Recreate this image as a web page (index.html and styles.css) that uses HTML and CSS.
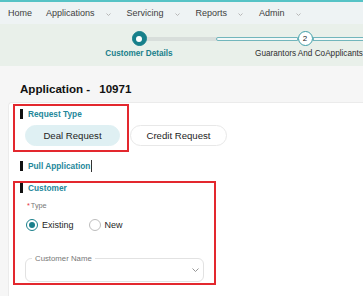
FILE: index.html
```html
<!DOCTYPE html>
<html lang="en">
<head>
  <meta charset="UTF-8">
  <meta name="viewport" content="width=device-width, initial-scale=1.0">
  <title>Application</title>
  <link rel="stylesheet" href="styles.css">
</head>
<body>
  <div class="topline"></div>
  <nav class="menu">
    <span class="menu-item">Home</span>
    <span class="menu-item">Applications<svg class="menu-caret" width="5" height="3" viewBox="0 0 5 3"><polyline points="0.5,0.5 2.5,2.5 4.5,0.5" fill="none" stroke="#b0b0b0" stroke-width="0.9"/></svg></span>
    <span class="menu-item">Servicing<svg class="menu-caret" width="5" height="3" viewBox="0 0 5 3"><polyline points="0.5,0.5 2.5,2.5 4.5,0.5" fill="none" stroke="#b0b0b0" stroke-width="0.9"/></svg></span>
    <span class="menu-item">Reports<svg class="menu-caret" width="5" height="3" viewBox="0 0 5 3"><polyline points="0.5,0.5 2.5,2.5 4.5,0.5" fill="none" stroke="#b0b0b0" stroke-width="0.9"/></svg></span>
    <span class="menu-item">Admin<svg class="menu-caret" width="5" height="3" viewBox="0 0 5 3"><polyline points="0.5,0.5 2.5,2.5 4.5,0.5" fill="none" stroke="#b0b0b0" stroke-width="0.9"/></svg></span>
  </nav>

  <div class="stepper">
    <div class="step done">
      <div class="step-track">
        <span class="seg"></span>
        <span class="dot"></span>
        <span class="seg seg-gray"></span>
      </div>
      <div class="step-label">Customer Details</div>
    </div>
    <div class="step">
      <div class="step-track">
        <span class="seg seg-line seg-first"></span>
        <span class="dot">2</span>
        <span class="seg seg-line"></span>
      </div>
      <div class="step-label">Guarantors And CoApplicants</div>
    </div>
  </div>

  <div class="page">
    <h1 class="app-title">Application -<span class="app-id">10971</span></h1>
    <div class="card">
      <div class="section request-type">
        <div class="section-title"><span class="bar"></span>Request Type</div>
        <div class="pills">
          <span class="pill active">Deal Request</span>
          <span class="pill pill-wide">Credit Request</span>
        </div>
      </div>

      <div class="section-title pull"><span class="bar"></span>Pull Application<span class="cursor"></span></div>

      <div class="section customer">
        <div class="section-title"><span class="bar"></span>Customer</div>
        <div class="field-label"><span class="req">*</span>Type</div>
        <div class="radios">
          <span class="radio checked"><span class="radio-circle"></span>Existing</span>
          <span class="radio"><span class="radio-circle"></span>New</span>
        </div>
        <div class="select">
          <span class="select-label">Customer Name</span>
          <svg width="7" height="4" viewBox="0 0 7 4"><polyline points="0.5,0.5 3.5,3.5 6.5,0.5" fill="none" stroke="#8a8a8a" stroke-width="0.9"/></svg>
        </div>
      </div>
    </div>
  </div>
</body>
</html>
```

FILE: styles.css
```css
*{
  margin: 0;
  padding: 0;
  box-sizing: border-box;
}
html, body{
  overflow: hidden;
}
body{
  width: 363px;
  height: 296px;
  font-family: "Liberation Sans", Arial, sans-serif;
  background: #f6f6f6;
  color: #222;
}
.topline{
  height: 2px;
  background: #56c3c6;
}
.menu{
  display: flex;
  align-items: center;
  gap: 16px;
  height: 22px;
  padding-left: 8px;
  background: #eef3f4;
  font-size: 9px;
  color: #404040;
}
.menu-item{
  display: flex;
  align-items: center;
  white-space: nowrap;
}
.menu-item:first-child{
  margin-right: -2px;
}
.menu-caret{
  margin: 2px 0 0 11px;
}

.stepper{
  display: flex;
  height: 42px;
  padding: 7px 0 0 54px;
  background: #e9f0ea;
  overflow: hidden;
}
.step{
  flex: none;
  width: 170px;
  display: flex;
  flex-direction: column;
  align-items: center;
}
.step-track{
  display: flex;
  align-items: center;
  width: 100%;
  height: 15px;
}
.seg{
  flex: 1;
  height: 4px;
}
.seg-gray{
  background: #d8dedb;
}
.seg-line{
  border: 1px solid #72b6bc;
  background: #f3f8f8;
}
.seg-first{
  margin-left: -8px;
  border-radius: 2px 0 0 2px;
}
.dot{
  flex: none;
  width: 15px;
  height: 15px;
  border-radius: 50%;
  display: flex;
  align-items: center;
  justify-content: center;
  border: 1.5px solid #3f9ea8;
  background: #fff;
  font-size: 8px;
  color: #222;
}
.step.done .dot{
  background: #17808b;
  border-color: #17808b;
}
.step.done .dot:after{
  content: '';
  width: 6px;
  height: 6px;
  border-radius: 50%;
  background: #fff;
}
.step-label{
  margin-top: 3px;
  font-size: 8.2px;
  line-height: 10px;
  white-space: nowrap;
  color: #2e2e2e;
}
.step.done .step-label{
  color: #1a7f8b;
  font-weight: bold;
}

.app-title{
  margin: 16px 0 6px 20px;
  font-size: 11.6px;
  line-height: 14px;
  font-weight: bold;
  color: #111;
}
.app-id{
  margin-left: 9px;
}
.card{
  min-height: 200px;
  margin-left: 8px;
  padding: 1px 0 0 4px;
  background: #fff;
  border: 1px solid #ebebeb;
  border-right: none;
  border-radius: 4px 0 0 0;
}
.section{
  border: 2px solid #e3282e;
}
.section-title{
  display: flex;
  align-items: center;
  height: 10px;
  font-size: 8.3px;
  font-weight: bold;
  color: #23879a;
  white-space: nowrap;
}
.bar{
  width: 3px;
  height: 10px;
  margin-right: 5px;
  background: #111;
}
.request-type{
  width: 116px;
  padding: 3px 0 4px 5px;
}
.pills{
  display: flex;
  gap: 10px;
  margin: 6px 0 0 5px;
}
.pill{
  flex: none;
  display: flex;
  align-items: center;
  justify-content: center;
  width: 95px;
  height: 21px;
  border-radius: 11px;
  border: 1px solid #e8e8e8;
  background: #fff;
  font-size: 9.6px;
  color: #1e1e1e;
  white-space: nowrap;
}
.pill-wide{
  width: 97px;
}
.pill.active{
  background: #dff0f3;
  border-color: #dff0f3;
}
.pull{
  margin: 9px 0 10px 7px;
}
.cursor{
  width: 1px;
  height: 12px;
  margin-left: 1px;
  background: #333;
}

.customer{
  width: 203px;
  padding: 0 0 1px 5px;
}
.field-label{
  margin: 8px 0 0 7px;
  font-size: 7.3px;
  line-height: 9px;
  color: #777;
}
.req{
  margin-right: 1px;
  color: #e5333a;
}
.radios{
  display: flex;
  align-items: center;
  height: 12px;
  margin: 9px 0 0 6px;
}
.radio{
  display: flex;
  align-items: center;
  margin-right: 15px;
  font-size: 9px;
  color: #1e1e1e;
}
.radio-circle{
  display: flex;
  align-items: center;
  justify-content: center;
  width: 12px;
  height: 12px;
  margin-right: 4px;
  border-radius: 50%;
  border: 1px solid #bdbdbd;
  background: #fff;
}
.radio.checked .radio-circle{
  border-color: #1a7f8b;
}
.radio.checked .radio-circle:after{
  content: '';
  width: 6px;
  height: 6px;
  border-radius: 50%;
  background: #1a7f8b;
}
.select{
  position: relative;
  display: flex;
  align-items: center;
  justify-content: flex-end;
  width: 179px;
  height: 24px;
  margin: 27px 0 0 5px;
  padding-right: 4px;
  border: 1px solid #e2e2e2;
  border-radius: 6px;
}
.select-label{
  position: absolute;
  left: 6px;
  top: -5px;
  padding: 0 3px;
  background: #fff;
  font-size: 7.8px;
  line-height: 9px;
  color: #777;
  white-space: nowrap;
}
```
